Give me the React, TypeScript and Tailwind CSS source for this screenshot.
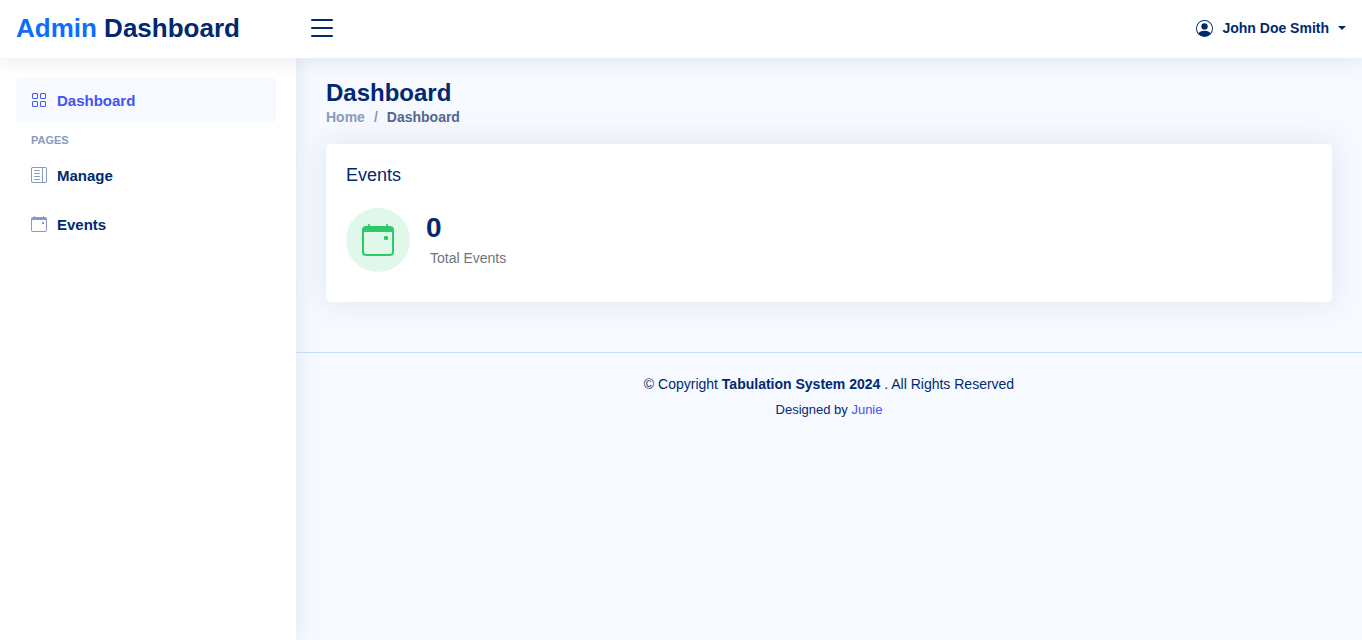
import { BsCalendarEvent, BsGrid, BsLayoutTextSidebar, BsList, BsPersonCircle } from "react-icons/bs";

function Header() {
  return (
    <header className="relative z-20 flex h-[58px] items-center bg-white px-4 pb-0.5 shadow-[0_2px_20px_rgba(1,41,112,0.1)]">
      <a href="#" className="w-[280px] text-[26px] leading-8 font-bold text-[#012970]">
        <span className="text-[#0d6efd]">Admin</span> Dashboard
      </a>
      <button type="button" aria-label="Toggle sidebar" className="ml-[10px] text-[#012970]">
        <BsList className="size-8" />
      </button>
      <button type="button" className="ml-auto flex items-center gap-[9px] text-sm font-bold text-[#012970]">
        <BsPersonCircle className="size-[17px]" />
        <span>John Doe Smith</span>
        <span className="border-x-4 border-t-4 border-x-transparent border-t-[#012970]" />
      </button>
    </header>
  );
}

function Sidebar() {
  return (
    <aside className="z-10 w-[296px] shrink-0 bg-white px-4 pt-5 shadow-[0_0_20px_rgba(1,41,112,0.1)]">
      <nav className="mr-1 flex flex-col text-[15px] font-bold text-[#012970]">
        <a href="#" className="flex h-11 items-center gap-[10px] rounded bg-[#f6f9ff] px-[15px] text-[#4154f1]">
          <BsGrid className="size-4" />
          <span className="pt-0.5">Dashboard</span>
        </a>
        <h2 className="mt-[10px] mb-[5px] pl-[15px] text-[11px] leading-4 font-bold text-[#899bbd]">PAGES</h2>
        <a href="#" className="flex h-11 items-center gap-[10px] rounded px-[15px]">
          <BsLayoutTextSidebar className="size-4 text-[#899bbd]" />
          <span className="pt-0.5">Manage</span>
        </a>
        <a href="#" className="mt-[5px] flex h-11 items-center gap-[10px] rounded px-[15px]">
          <BsCalendarEvent className="size-4 text-[#899bbd]" />
          <span className="pt-0.5">Events</span>
        </a>
      </nav>
    </aside>
  );
}

function EventsCard() {
  return (
    <section className="mt-4 rounded-[5px] bg-white px-5 pt-5 pb-[30px] shadow-[0_0_30px_rgba(1,41,112,0.1)]">
      <h2 className="text-lg leading-[22px] text-[#012970]">Events</h2>
      <div className="mt-[22px] flex items-center">
        <div className="flex size-16 items-center justify-center rounded-full bg-[#e0f8e9] text-[#2eca6a]">
          <BsCalendarEvent className="size-8" />
        </div>
        <div className="pl-4">
          <p className="text-[28px] leading-8 font-bold text-[#012970]">0</p>
          <p className="pt-1 pl-1 text-sm leading-5 text-[#6c757d]">Total Events</p>
        </div>
      </div>
    </section>
  );
}

export default function App() {
  return (
    <div className="flex min-h-screen flex-col bg-[#f6f9ff] font-['Liberation_Sans',sans-serif] text-[#012970]">
      <Header />
      <div className="flex grow">
        <Sidebar />
        <div className="min-w-0 grow">
          <main className="px-[30px] pt-5 pb-[50px]">
            <h1 className="text-2xl leading-[29px] font-bold">Dashboard</h1>
            <nav aria-label="Breadcrumb" className="flex gap-[9px] text-sm leading-[21px] font-bold text-[#899bbd]">
              <a href="#">Home</a>
              <span>/</span>
              <span className="text-[#51678f]">Dashboard</span>
            </nav>
            <EventsCard />
          </main>
          <footer className="border-t border-[#cddfff] py-[19px] text-center text-sm">
            <p className="leading-6">
              © Copyright <strong>Tabulation System 2024</strong> . All Rights Reserved
            </p>
            <p className="pt-1 text-[13px] leading-5">
              Designed by <a href="#" className="text-[#4154f1]">Junie</a>
            </p>
          </footer>
        </div>
      </div>
    </div>
  );
}
